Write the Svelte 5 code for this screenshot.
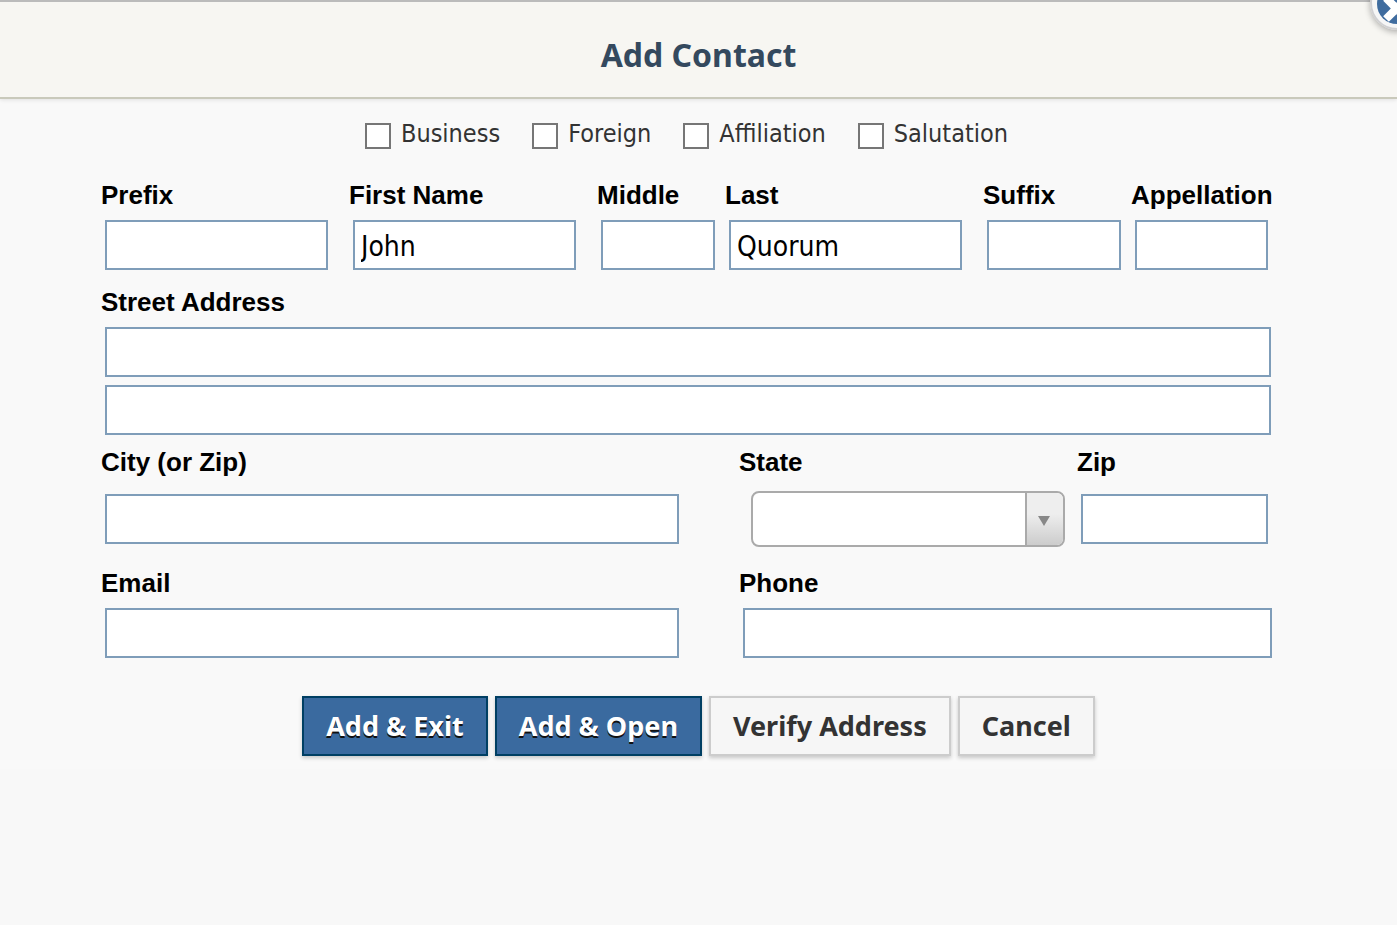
<script>
  const flags = ['Business', 'Foreign', 'Affiliation', 'Salutation'];
  const streetLines = ['Street Address', 'Street Address line 2'];

  let checked = $state({});
  let contact = $state({
    prefix: '', first: 'John', middle: '', last: 'Quorum', suffix: '', appellation: '',
    street: ['', ''], city: '', state: '', zip: '', email: '', phone: ''
  });

  // name row, in column order; `tight` fields sit closer to their right neighbour
  const nameFields = [
    { key: 'prefix', label: 'Prefix' },
    { key: 'first', label: 'First Name' },
    { key: 'middle', label: 'Middle', tight: true },
    { key: 'last', label: 'Last' },
    { key: 'suffix', label: 'Suffix', tight: true },
    { key: 'appellation', label: 'Appellation', end: true }
  ];
</script>

<div class="dialog">
  <header>
    <h1>Add Contact</h1>
    <button class="close" type="button" aria-label="Close">
      <svg viewBox="0 0 54 54" width="54" height="54" aria-hidden="true">
        <circle cx="27" cy="27" r="26" fill="#f6f6f6" stroke="#d0d0d2" stroke-width="2" />
        <circle cx="27" cy="28" r="20" fill="#3f6c9f" />
        <path d="M16 22 L37 43 M37 22 L16 43" stroke="#fff" stroke-width="8" />
      </svg>
    </button>
  </header>

  <form onsubmit={(e) => e.preventDefault()}>
    <div class="flags">
      {#each flags as flag}
        <label><input type="checkbox" bind:checked={checked[flag]} />{flag}</label>
      {/each}
    </div>

    <div class="row names">
      {#each nameFields as f}
        <div class="field" class:tight={f.tight} class:end={f.end}>
          <label for={f.key}>{f.label}</label>
          <input id={f.key} type="text" bind:value={contact[f.key]} />
        </div>
      {/each}
    </div>

    <div class="field street">
      <label for="street0">Street Address</label>
      {#each streetLines as line, i}
        <input id="street{i}" type="text" aria-label={line} bind:value={contact.street[i]} />
      {/each}
    </div>

    <div class="row place">
      <div class="field city">
        <label for="city">City (or Zip)</label>
        <input id="city" type="text" bind:value={contact.city} />
      </div>
      <div class="field state">
        <label for="state">State</label>
        <div class="picker">
          <select id="state" bind:value={contact.state}>
            <option value=""></option>
            <option>CA</option>
            <option>NY</option>
            <option>TX</option>
          </select>
          <span class="arrow">
            <svg viewBox="0 0 12 10" width="12" height="10" aria-hidden="true"><path d="M0 0 H12 L6 10 Z" fill="#888" /></svg>
          </span>
        </div>
      </div>
      <div class="field end">
        <label for="zip">Zip</label>
        <input id="zip" type="text" bind:value={contact.zip} />
      </div>
    </div>

    <div class="row reach">
      <div class="field city">
        <label for="email">Email</label>
        <input id="email" type="email" bind:value={contact.email} />
      </div>
      <div class="field last">
        <label for="phone">Phone</label>
        <input id="phone" type="tel" bind:value={contact.phone} />
      </div>
    </div>
  </form>

  <div class="actions">
    <button class="primary" type="button">Add &amp; Exit</button>
    <button class="primary" type="button">Add &amp; Open</button>
    <button type="button">Verify Address</button>
    <button type="button">Cancel</button>
  </div>
</div>

<style>
  :global(body){background:#f8f8f8}
  .dialog{--head:Tahoma,"Noto Sans",sans-serif;--ui:Tahoma,"DejaVu Sans Condensed",sans-serif;
    overflow:hidden;padding-bottom:13px;background:#f9f9f9;color:#333}
  *{box-sizing:border-box}

  header{position:relative;height:99px;display:flex;align-items:center;justify-content:center;padding-top:10px;
    background:#f7f6f2;border-top:2px solid #bbb;border-bottom:2px solid #c9c9bb;box-shadow:0 1px 4px rgba(0,0,0,.1)}
  h1{margin:0;font:700 32px/40px var(--head);color:#34495e}
  .close{position:absolute;top:-26px;right:-27px;width:54px;height:54px;padding:0;border:0;border-radius:50%;
    background:none;box-shadow:0 2px 6px rgba(0,0,0,.3);cursor:pointer}
  .close svg{display:block}

  form{padding:20px 125px 0 101px}
  .flags{display:flex;justify-content:center;gap:32px;height:32px}
  .flags label{display:flex;gap:10px;font:25px/30px var(--ui)}
  .flags input{appearance:none;width:26px;height:26px;margin:4px 0 0;border:2px solid #767676;background:#fff}
  .flags input:checked{background:#3a6a9f;box-shadow:inset 0 0 0 4px #fff}

  .row{display:grid}
  .names{grid-template-columns:248fr 248fr 128fr 258fr 148fr 141fr;margin-top:29px}
  .place{grid-template-columns:638fr 338fr 195fr;margin-top:12px}
  .reach{grid-template-columns:638fr 533fr;margin-top:24px}
  .field{display:flex;flex-direction:column;gap:10px;min-width:0;padding:0 21px 0 4px}
  .field.tight{padding-right:10px}
  .field.end{padding-right:4px}
  .field.last{padding-right:0}
  .field.city{padding-right:60px}
  .field.state{padding:0 12px 0 12px}
  .place .field{gap:17px}
  .field label{margin-left:-4px;font:700 26px/30px Arial,"Liberation Sans",sans-serif;color:#000;white-space:nowrap}
  .field.state label{margin-left:-12px}
  .field input{width:100%;height:50px;padding:2px 6px 0;border:2px solid #7f9db9;border-radius:0;background:#fff;
    font:28px/34px var(--ui);color:#000}
  .street{margin-top:17px;padding-right:1px}
  .street input + input{margin-top:-2px}

  .picker{position:relative;height:56px;margin:-3px 0}
  select{appearance:none;width:100%;height:100%;padding:0 48px 0 8px;border:2px solid #aaa;border-radius:8px;
    background:#fff;font:28px/34px var(--ui);color:#000}
  .arrow{position:absolute;top:2px;right:2px;bottom:2px;width:38px;display:flex;align-items:center;justify-content:center;
    padding:4px 2px 0 0;border-left:2px solid #aaa;border-radius:0 6px 6px 0;background:linear-gradient(#eee 40%,#ccc);pointer-events:none}

  .actions{display:flex;justify-content:center;gap:7px;margin-top:38px}
  .actions button{height:60px;padding:0 22px;border:2px solid #ccc;background:#f6f6f6;color:#333;
    font:700 27px/36px var(--head);box-shadow:0 2px 4px rgba(0,0,0,.2);cursor:pointer}
  .actions .primary{border-color:#003f63;background:#3a6a9f;color:#fff;text-shadow:0 2px 0 #111}
</style>
